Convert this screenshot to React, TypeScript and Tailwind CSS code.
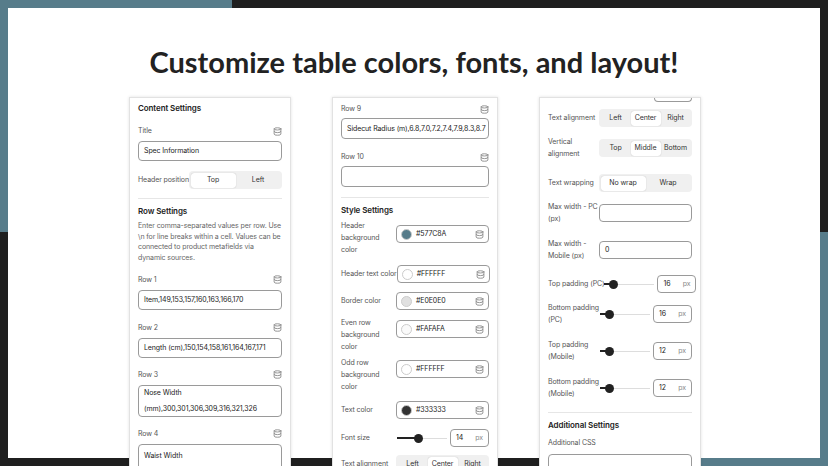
import React from "react";

const Db = () => (
  <svg width="9" height="9" viewBox="0 0 24 24" fill="none" stroke="#8a8a8a" strokeWidth="2.4" strokeLinecap="round" className="shrink-0">
    <ellipse cx="12" cy="5" rx="9" ry="3" />
    <path d="M3 5v14a9 3 0 0 0 18 0V5" />
    <path d="M3 12a9 3 0 0 0 18 0" />
  </svg>
);

const Label = ({ t }: { t: string }) => (
  <div className="flex items-center justify-between h-[12px] text-[#555]">
    <span>{t}</span>
    <Db />
  </div>
);

const Input = ({ v, h = "h-[20px] whitespace-nowrap" }: { v: string; h?: string }) => (
  <div className={`${h} border border-[#9a9a9a] rounded-[4px] px-[5px] flex items-center text-[#222] leading-[16px] overflow-hidden`}>{v}</div>
);

const Seg = ({ opts, active, w = "w-[93px]" }: { opts: string[]; active: number; w?: string }) => (
  <div className={`${w} h-[18px] bg-[#f0f0f0] rounded-[4px] p-[1.5px] flex`}>
    {opts.map((o, i) => (
      <div key={o} className={`flex-1 flex items-center justify-center rounded-[3px] text-[#333] whitespace-nowrap ${i === active ? "bg-white shadow-[0_0_1px_rgba(0,0,0,0.3)]" : ""}`}>{o}</div>
    ))}
  </div>
);

const Color = ({ c, v }: { c: string; v: string }) => (
  <div className="w-[93px] h-[18px] border border-[#9a9a9a] rounded-[4px] px-[4px] flex items-center gap-[4px] text-[#222]">
    <span className="w-[11px] h-[11px] rounded-full border border-[#ccc]" style={{ background: c }} />
    <span className="flex-1">{v}</span>
    <Db />
  </div>
);

const Row = ({ label, children, mt, multi = false, imt = 0 }: { label: React.ReactNode; children: React.ReactNode; mt: number; multi?: boolean; imt?: number }) => (
  <div className={`flex ${multi ? "items-start" : "items-center"} justify-between`} style={{ marginTop: mt }}>
    <div className="leading-[12px] text-[#555] whitespace-nowrap">{label}</div>
    <div className="shrink-0" style={{ marginTop: imt }}>{children}</div>
  </div>
);

const Slider = ({ pos, v }: { pos: number; v: string }) => (
  <div className="flex items-center gap-[3px]">
    <div className="relative w-[50px] h-[10px] flex items-center">
      <div className="w-full h-[1px] bg-[#ddd]" />
      <div className="absolute left-0 h-[2px] bg-[#222]" style={{ width: pos }} />
      <div className="absolute w-[9px] h-[9px] rounded-full bg-[#222]" style={{ left: pos - 4 }} />
    </div>
    <div className="w-[39px] h-[18px] border border-[#9a9a9a] rounded-[4px] px-[5px] flex items-center justify-between text-[#222]">
      <span>{v}</span><span className="text-[#888]">px</span>
    </div>
  </div>
);

const Divider = ({ mt, mb }: { mt: number; mb: number }) => (
  <div className="h-[1px] bg-[#e6e6e6]" style={{ marginTop: mt, marginBottom: mb }} />
);

const H = ({ t }: { t: string }) => <div className="font-semibold text-[8px] text-[#222] h-[12px] leading-[12px]">{t}</div>;

const panel = "bg-white border border-[#e2e2e2] shadow-[0_0_3px_rgba(0,0,0,0.12)] px-[8px] text-[7px] tracking-[-0.1px] overflow-hidden";

export default function App() {
  return (
    <div className="relative w-[828px] h-[466px] overflow-hidden" style={{ fontFamily: "Inter, 'Noto Sans', sans-serif" }}>
      <div className="absolute left-0 top-0 w-[232px] h-[232px] bg-[#577C8A]" />
      <div className="absolute left-[232px] top-0 right-0 h-[232px] bg-[#1f1f1f]" />
      <div className="absolute left-0 top-[232px] w-[596px] bottom-0 bg-[#1f1f1f]" />
      <div className="absolute left-[596px] top-[232px] right-0 bottom-0 bg-[#577C8A]" />
      <div className="relative mx-[8px] mt-[8px] h-[450px] bg-white">
        <div className="pt-[34px] text-center text-[29px] font-bold text-[#222] leading-[40px]" style={{ fontFamily: "Lato, 'Noto Sans', sans-serif" }}>
          Customize table colors, fonts, and layout!
        </div>
        <div className="flex mt-[15px] ml-[121px] gap-[41px] items-start">
          {/* Panel 1 */}
          <div className={`${panel} w-[162px] h-[380px] pt-[4px]`}>
            <H t="Content Settings" />
            <div className="mt-[11px]"><Label t="Title" /></div>
            <div className="mt-[4px]"><Input v="Spec Information" /></div>
            <div className="flex items-center justify-between mt-[10px]">
              <span className="text-[#555] whitespace-nowrap">Header position</span>
              <Seg opts={["Top", "Left"]} active={0} />
            </div>
            <Divider mt={9} mb={6} />
            <H t="Row Settings" />
            <div className="mt-[4px] text-[#666] leading-[10.7px]">Enter comma-separated values per row. Use \n for line breaks within a cell. Values can be connected to product metafields via dynamic sources.</div>
            <div className="mt-[10px]"><Label t="Row 1" /></div>
            <div className="mt-[4px]"><Input v="Item,149,153,157,160,163,166,170" /></div>
            <div className="mt-[12px]"><Label t="Row 2" /></div>
            <div className="mt-[4px]"><Input v="Length (cm),150,154,158,161,164,167,171" /></div>
            <div className="mt-[11px]"><Label t="Row 3" /></div>
            <div className="mt-[4px]"><Input h="h-[32px] py-[3px]" v="Nose Width (mm),300,301,306,309,316,321,326" /></div>
            <div className="mt-[11px]"><Label t="Row 4" /></div>
            <div className="mt-[4px]"><Input h="h-[40px] py-[3px] items-start" v="Waist Width (mm),251,255,259,261,265,269,273" /></div>
          </div>
          {/* Panel 2 */}
          <div className={`${panel} w-[166px] h-[380px] pt-[5px]`}>
            <Label t="Row 9" />
            <div className="mt-[3px]"><Input h="h-[21px] whitespace-nowrap" v="Sidecut Radius (m),6.8,7.0,7.2,7.4,7.9,8.3,8.7" /></div>
            <div className="mt-[12px]"><Label t="Row 10" /></div>
            <div className="mt-[3px]"><Input h="h-[21px]" v="" /></div>
            <Divider mt={10} mb={6} />
            <H t="Style Settings" />
            <Row label={<>Header<br />background<br />color</>} mt={4} multi imt={5}><Color c="#577C8A" v="#577C8A" /></Row>
            <Row label="Header text color" mt={9}><Color c="#FFFFFF" v="#FFFFFF" /></Row>
            <Row label="Border color" mt={9}><Color c="#E0E0E0" v="#E0E0E0" /></Row>
            <Row label={<>Even row<br />background<br />color</>} mt={7} multi imt={3}><Color c="#FAFAFA" v="#FAFAFA" /></Row>
            <Row label={<>Odd row<br />background<br />color</>} mt={4} multi imt={3}><Color c="#FFFFFF" v="#FFFFFF" /></Row>
            <Row label="Text color" mt={8}><Color c="#333333" v="#333333" /></Row>
            <Row label="Font size" mt={10}><Slider pos={21} v="14" /></Row>
            <Row label="Text alignment" mt={8}><Seg opts={["Left", "Center", "Right"]} active={1} /></Row>
          </div>
          {/* Panel 3 */}
          <div className={`${panel} w-[162px] h-[380px] pt-0`}>
            <div className="flex justify-end"><div className="w-[38px] h-[4px] border border-t-0 border-[#9a9a9a] rounded-b-[4px]" /></div>
            <Row label="Text alignment" mt={7}><Seg opts={["Left", "Center", "Right"]} active={1} /></Row>
            <Row label={<>Vertical<br />alignment</>} mt={9}><Seg opts={["Top", "Middle", "Bottom"]} active={1} /></Row>
            <Row label="Text wrapping" mt={14}><Seg opts={["No wrap", "Wrap"]} active={0} /></Row>
            <Row label={<>Max width - PC<br />(px)</>} mt={9}><div className="w-[93px] h-[18px] border border-[#9a9a9a] rounded-[4px]" /></Row>
            <Row label={<>Max width -<br />Mobile (px)</>} mt={13}><div className="w-[93px] h-[18px] border border-[#9a9a9a] rounded-[4px] px-[5px] flex items-center text-[#222]">0</div></Row>
            <Row label="Top padding (PC)" mt={13}><Slider pos={9} v="16" /></Row>
            <Row label={<>Bottom padding<br />(PC)</>} mt={9}><Slider pos={9} v="16" /></Row>
            <Row label={<>Top padding<br />(Mobile)</>} mt={13}><Slider pos={9} v="12" /></Row>
            <Row label={<>Bottom padding<br />(Mobile)</>} mt={13}><Slider pos={9} v="12" /></Row>
            <Divider mt={12} mb={6} />
            <H t="Additional Settings" />
            <div className="mt-[6px] text-[#555] h-[12px] leading-[12px]">Additional CSS</div>
            <div className="mt-[5px] h-[49px] border border-[#9a9a9a] rounded-[4px]" />
          </div>
        </div>
      </div>
    </div>
  );
}
